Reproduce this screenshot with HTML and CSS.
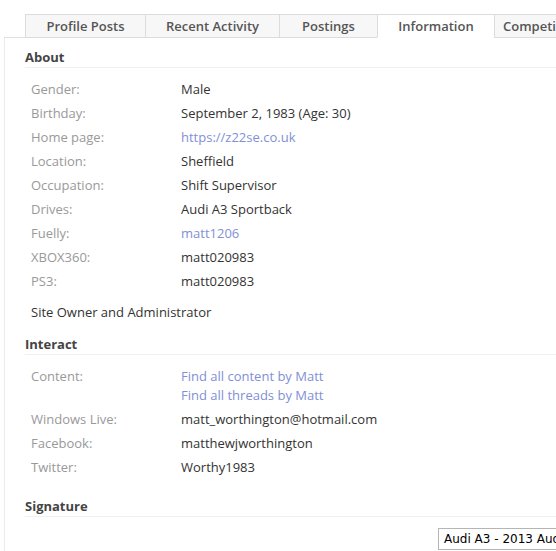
FILE: index.html
```html
<!DOCTYPE html>
<html lang="en">
<head>
<meta charset="utf-8">
<title>Matt - Information</title>
<link rel="stylesheet" href="styles.css">
</head>
<body>
<div class="page">
  <div class="crumb"><p class="crumb-text">Viewing profile of Matt · messages · group</p></div>
  <ul class="tabs">
    <li class="tab tab-posts">Profile Posts</li>
    <li class="tab tab-activity">Recent Activity</li>
    <li class="tab tab-postings">Postings</li>
    <li class="tab tab-info active">Information</li>
    <li class="tab tab-comp">Competitions</li>
  </ul>
  <div class="panel">
    <section class="block block-about">
      <h3 class="block-title">About</h3>
      <dl class="pairs">
        <div class="pair"><dt>Gender:</dt><dd>Male</dd></div>
        <div class="pair"><dt>Birthday:</dt><dd>September 2, 1983 (Age: 30)</dd></div>
        <div class="pair"><dt>Home page:</dt><dd><a href="#">https://z22se.co.uk</a></dd></div>
        <div class="pair"><dt>Location:</dt><dd>Sheffield</dd></div>
        <div class="pair"><dt>Occupation:</dt><dd>Shift Supervisor</dd></div>
        <div class="pair"><dt>Drives:</dt><dd>Audi A3 Sportback</dd></div>
        <div class="pair"><dt>Fuelly:</dt><dd><a href="#">matt1206</a></dd></div>
        <div class="pair"><dt>XBOX360:</dt><dd>matt020983</dd></div>
        <div class="pair"><dt>PS3:</dt><dd>matt020983</dd></div>
      </dl>
      <p class="about-text">Site Owner and Administrator</p>
    </section>
    <section class="block block-interact">
      <h3 class="block-title">Interact</h3>
      <dl class="pairs">
        <div class="pair"><dt>Content:</dt><dd><a href="#">Find all content by Matt</a><br><a href="#">Find all threads by Matt</a></dd></div>
        <div class="pair"><dt>Windows Live:</dt><dd>matt_worthington@hotmail.com</dd></div>
        <div class="pair"><dt>Facebook:</dt><dd>matthewjworthington</dd></div>
        <div class="pair"><dt>Twitter:</dt><dd>Worthy1983</dd></div>
      </dl>
    </section>
    <section class="block block-signature">
      <h3 class="block-title">Signature</h3>
      <div class="signature">
        <span class="sig-box">Audi A3 - 2013 Audi A3 Sportback</span>
      </div>
    </section>
  </div>
</div>
</body>
</html>
```

FILE: styles.css
```css
html, body {
  margin: 0;
  padding: 0;
  background: #fff;
  overflow: hidden;
}

.page {
  width: 556px;
  height: 551px;
  overflow: hidden;
  font-family: "Open Sans", "Liberation Sans", sans-serif;
  font-size: 13px;
  color: #333;
}

/* line above the tabs, scrolled mostly out of view */
.crumb {
  height: 14px;
  overflow: hidden;
}

.crumb-text {
  margin: -18px 0 0 150px;
  line-height: 19px;
  font-size: 13px;
  color: #aaa;
  white-space: nowrap;
}

.tabs {
  list-style: none;
  margin: 0 0 0 4px;
  padding: 0 0 0 21px;
  display: flex;
  border-bottom: 1px solid #e2e2e2;
  white-space: nowrap;
}

.tab {
  box-sizing: border-box;
  height: 24px;
  line-height: 22px;
  margin-bottom: -1px;
  text-align: center;
  font-weight: 600;
  font-size: 13px;
  color: #555;
  background: #f7f7f7;
  border: 1px solid #dcdcdc;
  border-right: none;
  flex: none;
}

.tab-posts { width: 120px; }
.tab-activity { width: 134px; }
.tab-postings { width: 98px; }
.tab-info { width: 117px; }
.tab-comp { width: 90px; text-align: left; padding-left: 8px; border-right: 1px solid #dcdcdc; }

.tab.active {
  background: #fff;
  border-bottom-color: #fff;
}

.panel {
  margin-left: 4px;
  border-left: 1px solid #ececec;
  padding: 10px 0 40px 20px;
}

.block-interact {
  margin-top: 13px;
}

.block-signature {
  margin-top: 18px;
}

.block-title {
  margin: 0;
  font-size: 13px;
  font-weight: 700;
  line-height: 18px;
  padding-bottom: 1px;
  color: #444;
  border-bottom: 1px solid #f0f0f0;
}

.pairs {
  margin: 9px 0 0 0;
  padding: 0;
}

.pair {
  display: flex;
  padding: 3px 0 2px;
  line-height: 19px;
}

.pair dt {
  width: 150px;
  padding-left: 6px;
  color: #999;
  flex: none;
}

.pair dd {
  margin: 0;
  color: #333;
  white-space: nowrap;
}

.pair a {
  color: #7f90d6;
  text-decoration: none;
}

.about-text {
  margin: 10px 0 0 6px;
  line-height: 19px;
  color: #333;
}

.signature {
  padding: 11px 0 0 413px;
  white-space: nowrap;
}

.sig-box {
  display: inline-block;
  border: 1px solid #b5b5b5;
  padding: 2px 5px;
  font-family: "DejaVu Sans", Verdana, sans-serif;
  font-size: 12px;
  line-height: 16px;
  color: #000;
}
```
